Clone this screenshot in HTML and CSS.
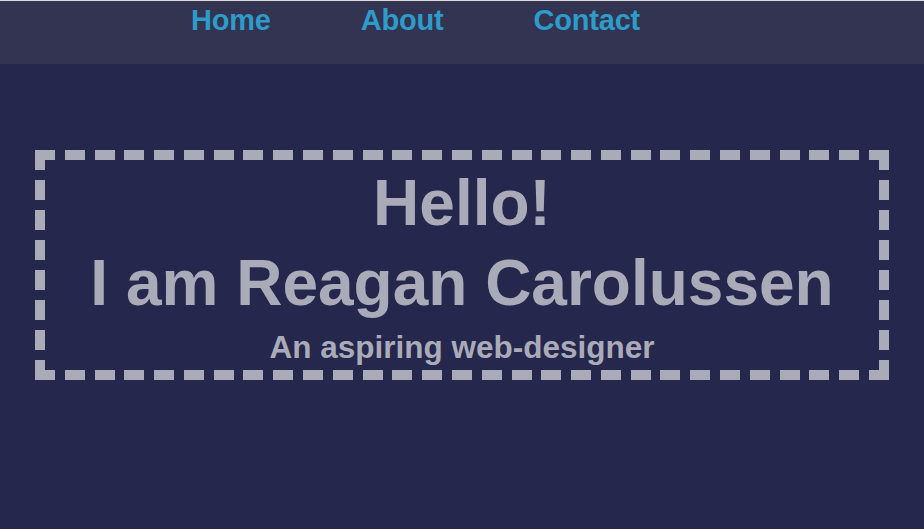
FILE: index.html
```html
<!DOCTYPE html>
<html lang="en">
<head>
<meta charset="utf-8">
<title>Reagan Carolussen</title>
<link rel="stylesheet" href="styles.css">
</head>
<body>
<header class="topbar">
  <nav class="nav">
    <a class="nav-link" href="#">Home</a>
    <a class="nav-link" href="#">About</a>
    <a class="nav-link" href="#">Contact</a>
  </nav>
</header>
<main class="hero">
  <section class="intro-box">
    <h1 class="intro-title">Hello!<br>I am Reagan Carolussen</h1>
    <p class="intro-sub">An aspiring web-designer</p>
  </section>
</main>
</body>
</html>
```
FILE: styles.css
```css
html, body {
  margin: 0;
  padding: 0;
}
body {
  background: #25274d;
  font-family: "Liberation Sans", Arial, sans-serif;
  font-weight: bold;
  min-height: 529px;
  border-top: 1px solid #d9d9de;
  box-sizing: border-box;
}
.topbar {
  background: #333452;
  height: 63px;
}
.nav {
  display: flex;
  gap: 90px;
  padding: 2px 0 0 191px;
}
.nav-link {
  color: #2e9cca;
  text-decoration: none;
  font-size: 29px;
  line-height: 34px;
  letter-spacing: -0.2px;
}
.hero {
  padding: 86px 35px 0;
}
.intro-box {
  box-sizing: border-box;
  height: 230px;
  border: 10px solid transparent;
  background:
    repeating-linear-gradient(90deg, #aaabb8 0 20px, transparent 20px 29.7857px) left top / 100% 10px no-repeat border-box,
    repeating-linear-gradient(90deg, #aaabb8 0 20px, transparent 20px 29.7857px) left bottom / 100% 10px no-repeat border-box,
    repeating-linear-gradient(180deg, #aaabb8 0 20px, transparent 20px 30px) left top / 10px 100% no-repeat border-box,
    repeating-linear-gradient(180deg, #aaabb8 0 20px, transparent 20px 30px) right top / 10px 100% no-repeat border-box;
  text-align: center;
  color: #aaabb8;
  padding: 3px 0 5px;
}
.intro-title {
  margin: 0;
  font-size: 64px;
  line-height: 80px;
  font-weight: bold;
}
.intro-sub {
  margin: 6px 0 0;
  font-size: 31.5px;
  line-height: 36px;
}
```
